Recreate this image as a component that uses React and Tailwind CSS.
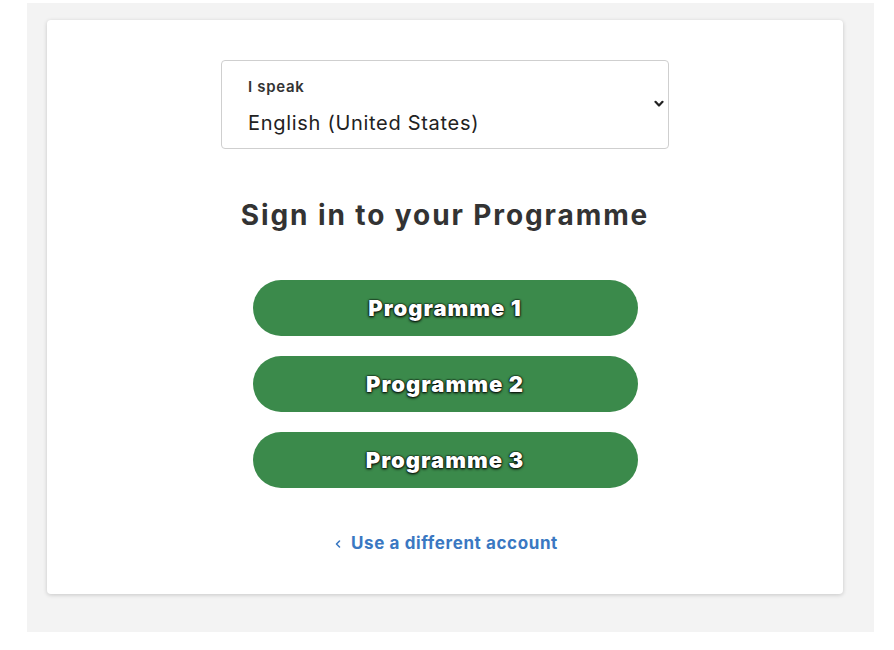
import { ChevronLeft } from "lucide-react";

const programmes = ["Programme 1", "Programme 2", "Programme 3"];

export default function App() {
  return (
    <div className="h-[650px] w-[894px] bg-white pt-[3px] pl-[27px] font-['Inter',sans-serif]">
      <div className="h-[629px] w-[847px] bg-[#f3f3f3] pt-[17px] pl-[20px]">
        <div className="flex h-[574px] w-[796px] flex-col items-center rounded-[4px] bg-white pt-[40px] shadow-[0_1px_4px_rgba(0,0,0,0.18)]">
          <div className="relative h-[89px] w-[448px] rounded-[4px] border border-[#cfcfcf] pl-[26px] pt-[17px]">
            <p className="text-[15px] font-semibold leading-[18px] tracking-[0.7px] text-[#333]">I speak</p>
            <p className="mt-[15px] text-[20px] leading-[24px] tracking-[0.7px] text-[#222]">English (United States)</p>
            <svg className="absolute right-[4px] top-[39px]" width="10" height="8" viewBox="0 0 10 8">
              <path d="M1.5 1.8 L5 5.5 L8.5 1.8" fill="none" stroke="#222" strokeWidth="2.2" strokeLinecap="round" strokeLinejoin="round" />
            </svg>
          </div>

          <h1 className="mt-[49px] text-[28px] font-bold leading-[34px] tracking-[1.9px] text-[#333]">
            Sign in to your Programme
          </h1>

          <div className="mt-[48px] flex flex-col gap-[20px]">
            {programmes.map((name) => (
              <button
                key={name}
                className="h-[56px] w-[385px] rounded-full bg-[#3b8a4b] text-[22px] font-black tracking-[1px] text-white [text-shadow:0_0_2px_#000,0_1px_3px_#000,0_0_1px_#000]"
              >
                {name}
              </button>
            ))}
          </div>

          <a href="#" className="mt-[43px] flex items-center gap-[7px] text-[17px] font-bold tracking-[0.6px] text-[#3a78c2]">
            <ChevronLeft className="h-[12px] w-[12px]" strokeWidth={3.2} />
            Use a different account
          </a>
        </div>
      </div>
    </div>
  );
}
